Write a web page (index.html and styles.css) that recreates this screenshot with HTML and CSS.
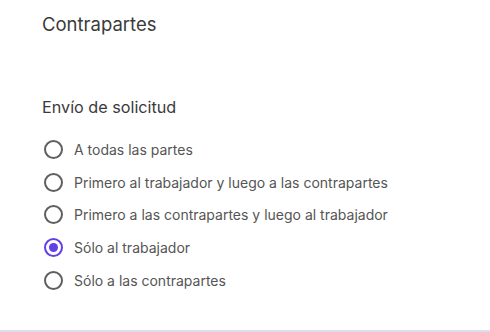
FILE: index.html
```html
<!DOCTYPE html>
<html lang="es">
<head>
<meta charset="utf-8">
<link rel="stylesheet" href="styles.css">
</head>
<body>
<div class="page">
  <h1 class="title">Contrapartes</h1>
  <section class="section">
    <h2 class="section-title">Envío de solicitud</h2>
    <div class="radio-group">
      <label class="radio"><span class="radio-icon"></span><span class="radio-label">A todas las partes</span></label>
      <label class="radio"><span class="radio-icon"></span><span class="radio-label">Primero al trabajador y luego a las contrapartes</span></label>
      <label class="radio"><span class="radio-icon"></span><span class="radio-label">Primero a las contrapartes y luego al trabajador</span></label>
      <label class="radio checked"><span class="radio-icon"></span><span class="radio-label">Sólo al trabajador</span></label>
      <label class="radio"><span class="radio-icon"></span><span class="radio-label">Sólo a las contrapartes</span></label>
    </div>
  </section>
</div>
</body>
</html>
```

FILE: styles.css
```css
html, body {
  margin: 0;
  padding: 0;
  background: #ffffff;
}
body {
  font-family: Inter, "Noto Sans", sans-serif;
  width: 490px;
  height: 332px;
  overflow: hidden;
}
.page {
  box-sizing: border-box;
  height: 332px;
  padding: 11px 0 0 42px;
  border-bottom: 2px solid #dcdcef;
}
.title {
  margin: 0;
  font-size: 18.5px;
  line-height: 27px;
  font-weight: 400;
  color: #3a3a3a;
}
.section {
  margin-top: 57px;
}
.section-title {
  margin: 0;
  font-size: 16.2px;
  line-height: 24px;
  font-weight: 400;
  color: #3a3a3a;
}
.radio-group {
  margin-top: 14px;
  display: flex;
  flex-direction: column;
}
.radio {
  display: flex;
  align-items: center;
  height: 32.75px;
  gap: 11px;
}
.radio-icon {
  box-sizing: border-box;
  width: 19px;
  height: 19px;
  margin-left: 2px;
  border: 2px solid #5f5f5f;
  border-radius: 50%;
  display: flex;
  align-items: center;
  justify-content: center;
}
.checked .radio-icon {
  border-color: #6240e8;
}
.checked .radio-icon::after {
  content: "";
  width: 9px;
  height: 9px;
  border-radius: 50%;
  background: #6240e8;
}
.radio-label {
  font-size: 14px;
  color: #555555;
}
```
